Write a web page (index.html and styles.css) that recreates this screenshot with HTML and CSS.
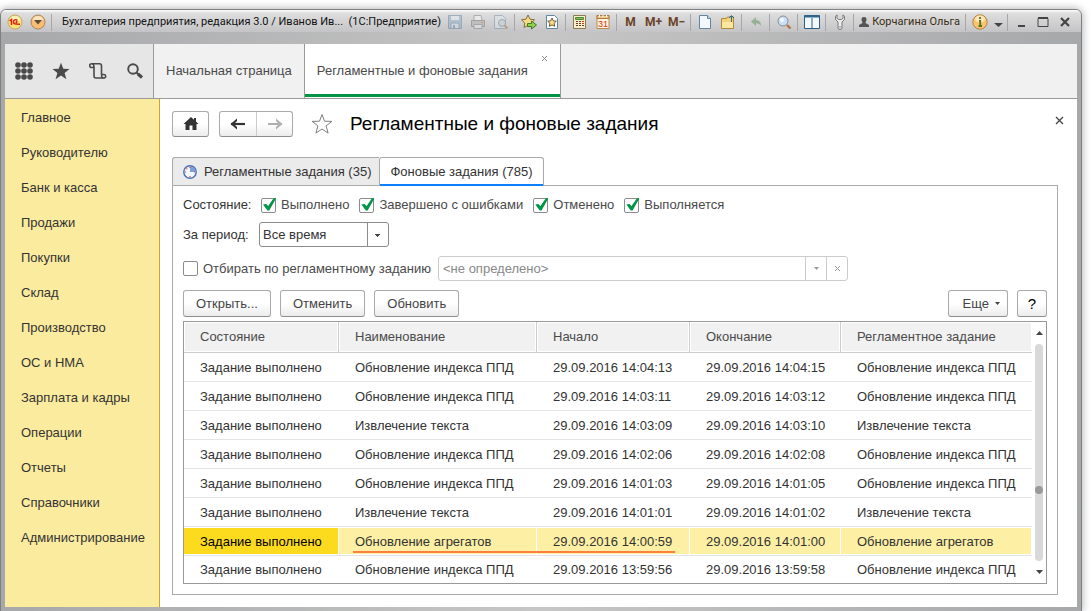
FILE: index.html
```html
<!DOCTYPE html>
<html lang="ru">
<head>
    <meta charset="UTF-8">
    <meta name="viewport" content="width=device-width, initial-scale=1.0">
    <title>Регламентные и фоновые задания</title>
    <link rel="stylesheet" href="styles.css">
</head>
<body>
    <div class="window">
        <header class="titlebar">
            <button class="tb-btn" aria-label="1С">
                <svg width="16" height="16" viewBox="0 0 16 16"><circle cx="8" cy="8" r="7" fill="#fbe27a" stroke="#c9a45c"/><ellipse cx="8" cy="5" rx="5" ry="3" fill="#fff3b8"/><path d="M2.500 7L4.500 5.500V11M10.500 6.300C8.500 5 6.500 6 6.500 8C6.500 10 8 10.300 13 10.300M10.500 8C9 7.500 8.500 8.700 10 8.700" fill="none" stroke="#d8200c" stroke-width="1.500"/></svg>
            </button>
            <button class="tb-btn" aria-label="Главное меню">
                <svg width="16" height="16" viewBox="0 0 16 16"><circle cx="8" cy="8" r="7" fill="#f8bf72" stroke="#a8855c"/><ellipse cx="8" cy="5" rx="5" ry="3" fill="#fde3bb"/><path d="M4 6h8l-4 4.500z" fill="#5f4a38"/></svg>
            </button>
            <span class="sep"></span>
            <span class="caption">Бухгалтерия предприятия, редакция 3.0 / Иванов Ив...&nbsp; (1С:Предприятие)</span>
            <div class="tb-tools">
                <button class="tb-btn faded" aria-label="Сохранить" disabled>
                    <svg width="16" height="16" viewBox="0 0 16 16"><path d="M1.500 1.500h13v13h-13z" fill="#87a9c2" stroke="#55799a"/><path d="M4 2h8v4H4z" fill="#e9f2f8"/><path d="M4 9h8v5.500H4z" fill="#d5e2eb" stroke="#55799a"/><path d="M6 11h2v3H6z" fill="#55799a"/></svg>
                </button>
                <button class="tb-btn faded" aria-label="Печать" disabled>
                    <svg width="16" height="16" viewBox="0 0 16 16"><path d="M4 1.500h7l1 5H4z" fill="#fff" stroke="#777"/><path d="M1.500 6.500h13v6h-13z" fill="#aaa" stroke="#666"/><path d="M4 10.500h8v4H4z" fill="#e4eef4" stroke="#777"/><path d="M11 8.500h2" stroke="#c60"/></svg>
                </button>
                <button class="tb-btn faded" aria-label="Предварительный просмотр" disabled>
                    <svg width="16" height="16" viewBox="0 0 16 16"><path d="M1.500 1.500h8l3 3v10h-11z" fill="#dfeaf2" stroke="#6d8ba2"/><circle cx="9" cy="9" r="3.500" fill="#bcd4e4" stroke="#777"/><path d="M11.500 11.500l3 3" stroke="#a86c3c" stroke-width="2"/></svg>
                </button>
                <span class="sep"></span>
                <button class="tb-btn" aria-label="Добавить в избранное">
                    <svg width="16" height="16" viewBox="0 0 16 16"><path d="M7 1l2 4.200 4.500.6-3.300 3.200.8 4.500-4-2.200-4 2.200.8-4.500L.5 5.800 5 5.200z" fill="#f8dc83" stroke="#8b6b3a"/><path d="M6.500 9.500h4v-2.500l5 4-5 4v-2.500h-4z" fill="#8fd04e" stroke="#3f7c22"/></svg>
                </button>
                <button class="tb-btn" aria-label="Избранное">
                    <svg width="16" height="16" viewBox="0 0 16 16"><path d="M2.500 1.500h8l3 3v10h-11z" fill="#fff" stroke="#5f86a3"/><path d="M8 4l1.300 2.800 3 .4-2.200 2.100.6 3L8 10.900l-2.700 1.400.6-3-2.200-2.100 3-.4z" fill="#f8dc83" stroke="#6e5a3a"/></svg>
                </button>
                <span class="sep"></span>
                <button class="tb-btn" aria-label="Калькулятор">
                    <svg width="16" height="16" viewBox="0 0 16 16"><path d="M1.500 1.500h12v13h-12z" fill="#f8edcb" stroke="#8d7952"/><path d="M3.500 3.500h8v2h-8z" fill="#7fbf52" stroke="#4f8d31"/><path d="M4 7.500h8M4 9.500h8M4 11.500h8" stroke="#6b3f24" stroke-dasharray="2 1"/><path d="M10 7.500h2M10 9.500h2" stroke="#d43a1c"/></svg>
                </button>
                <button class="tb-btn" aria-label="Календарь">
                    <svg width="16" height="16" viewBox="0 0 16 16"><path d="M2 1.500h12v13H2z" fill="#fff3dc" stroke="#b98a4e"/><path d="M2 1.500h12v3H2z" fill="#f0c68a" stroke="#a97a42"/><path d="M4.500 1v2M8 1v2M11.500 1v2" stroke="#fff"/><text class="day" x="3" y="13">31</text></svg>
                </button>
                <span class="sep"></span>
                <button class="tb-btn mem">M</button>
                <button class="tb-btn mem">M+</button>
                <button class="tb-btn mem">M−</button>
                <span class="sep"></span>
                <button class="tb-btn" aria-label="Новый документ">
                    <svg width="16" height="16" viewBox="0 0 16 16"><path d="M2.500 1.500h8l3 3v10h-11z" fill="#f3f8fc" stroke="#5f86a3"/><path d="M10.500 1.500v3h3" fill="#cfe0ec" stroke="#5f86a3"/></svg>
                </button>
                <button class="tb-btn" aria-label="Открыть файл">
                    <svg width="16" height="16" viewBox="0 0 16 16"><path d="M1.500 4.500h5l1-1.500h6v11.500h-12z" fill="#f3d27a" stroke="#b0893c"/><path d="M2 8h11v6H2z" fill="#fbe79f"/><path d="M11.500 8V2M9 4l2.500-2.500L14 4" fill="none" stroke="#2f6c93"/></svg>
                </button>
                <span class="sep"></span>
                <button class="tb-btn faded" aria-label="Назад" disabled>
                    <svg width="16" height="16" viewBox="0 0 16 16"><path d="M3 7.500L8 3v3c3 0 5 2 5 6-1-2-3-2.500-5-2.500V12z" fill="#4f8a4a"/></svg>
                </button>
                <span class="sep"></span>
                <button class="tb-btn" aria-label="Найти">
                    <svg width="16" height="16" viewBox="0 0 16 16"><circle cx="7" cy="7" r="5" fill="#c9e0f7" stroke="#8c8c8c"/><circle cx="6" cy="6" r="2" fill="#f2f8fe"/><path d="M11 11l3.500 3.500" stroke="#b27346" stroke-width="2.400"/></svg>
                </button>
                <span class="sep"></span>
                <button class="tb-btn" aria-label="Панели">
                    <svg width="16" height="16" viewBox="0 0 16 16"><path d="M.5 1.500h15v13H.5z" fill="#f2f8fc" stroke="#2d5f86"/><path d="M.5 1.500h15v2H.5z" fill="#2f668f"/><path d="M8 4v10.500" stroke="#2d5f86"/></svg>
                </button>
                <span class="sep"></span>
                <button class="tb-btn" aria-label="Настройки">
                    <svg width="16" height="16" viewBox="0 0 16 16"><path d="M5 .8L3.500 2.500v3L6 8v5.500q0 2 2 2t2-2V8l2.500-2.500v-3L11 .8v3.500L9.500 5.500h-3L5 4.300z" fill="#ececec" stroke="#777"/><circle cx="8" cy="13" r=".8" fill="#777"/></svg>
                </button>
                <span class="sep"></span>
                <button class="tb-user">
                    <svg width="10" height="12" viewBox="0 0 10 12"><path d="M5 1c2 0 2.500 1.200 2.500 2.500S6.500 6 6.500 7L10 9v2H0V9l3.500-2c0-1-1-2.200-1-3.500S3 1 5 1z" fill="#555"/></svg>
                    Корчагина Ольга
                </button>
                <span class="sep"></span>
                <button class="tb-btn" aria-label="Справка">
                    <svg width="16" height="16" viewBox="0 0 16 16"><circle cx="8" cy="8" r="7.200" fill="#f9c56c" stroke="#b08346"/><ellipse cx="8" cy="5" rx="5" ry="3.500" fill="#fde6bb"/><path d="M8 3v2M7 7h1.200v5M6.500 12h3.500" fill="none" stroke="#567420" stroke-width="1.800"/></svg>
                </button>
                <button class="tb-drop" aria-label="Ещё">
                    <svg width="9" height="12" viewBox="0 0 9 12"><path d="M0 7h9l-4.500 4z" fill="#444"/></svg>
                </button>
                <span class="sep"></span>
                <button class="tb-win" aria-label="Свернуть"><svg width="12" height="12" viewBox="0 0 12 12"><path d="M3 10h7" stroke="#444" stroke-width="2"/></svg></button>
                <button class="tb-win" aria-label="Развернуть"><svg width="12" height="12" viewBox="0 0 12 12"><path d="M1 2.500h10v8H1z" fill="none" stroke="#444"/><path d="M1 2h10" stroke="#444" stroke-width="2"/></svg></button>
                <button class="tb-win" aria-label="Закрыть"><svg width="12" height="12" viewBox="0 0 12 12"><path d="M2 2l8 8M10 2l-8 8" stroke="#444" stroke-width="2.200"/></svg></button>
            </div>
        </header>

        <div class="client">
            <nav class="topbar">
                <div class="quick">
                    <button aria-label="Все функции">
                        <svg width="18" height="18" viewBox="0 0 18 18" fill="#4a4a4a"><circle cx="3" cy="3" r="2.800"/><circle cx="9" cy="3" r="2.800"/><circle cx="15" cy="3" r="2.800"/><circle cx="3" cy="9" r="2.800"/><circle cx="9" cy="9" r="2.800"/><circle cx="15" cy="9" r="2.800"/><circle cx="3" cy="15" r="2.800"/><circle cx="9" cy="15" r="2.800"/><circle cx="15" cy="15" r="2.800"/></svg>
                    </button>
                    <button aria-label="Избранное">
                        <svg width="18" height="18" viewBox="0 0 18 18"><path d="M9 .8l2.300 5.900 6.200.3-4.900 3.900 1.800 6.300L9 13.600l-5.400 3.600 1.800-6.300L.5 7l6.200-.3z" fill="#4a4a4a"/></svg>
                    </button>
                    <button aria-label="История">
                        <svg width="18" height="18" viewBox="0 0 18 18" fill="none" stroke="#4a4a4a" stroke-width="1.600"><path d="M5 5.500H3A1.900 1.900 0 1 1 3 1.800H10.500Q12.500 1.800 12.500 4V12.500M5 5V14Q5 16 7 16H14.500"/><path d="M3 1.800Q5 1.800 5 5.500M12.500 12.500H14.500A1.800 1.800 0 1 1 14.500 16Q12.500 16 12.500 12.500"/></svg>
                    </button>
                    <button aria-label="Поиск">
                        <svg width="18" height="18" viewBox="0 0 18 18" fill="none" stroke="#4a4a4a"><circle cx="7" cy="7" r="4.800" stroke-width="1.900"/><path d="M10.500 10.500l2 2" stroke-width="2"/><path d="M12 12l4 3.500" stroke-width="3.200"/></svg>
                    </button>
                </div>
                <a class="page-tab" href="#">Начальная страница</a>
                <div class="page-tab page-tab-active">
                    <a href="#">Регламентные и фоновые задания</a>
                    <button class="tab-close" aria-label="Закрыть вкладку"><svg width="7" height="7" viewBox="0 0 7 7"><path d="M1 1l5 5M6 1L1 6" stroke="#888"/></svg></button>
                </div>
            </nav>

            <div class="workspace">
                <aside class="sidebar">
                    <a href="#">Главное</a>
                    <a href="#">Руководителю</a>
                    <a href="#">Банк и касса</a>
                    <a href="#">Продажи</a>
                    <a href="#">Покупки</a>
                    <a href="#">Склад</a>
                    <a href="#">Производство</a>
                    <a href="#">ОС и НМА</a>
                    <a href="#">Зарплата и кадры</a>
                    <a href="#">Операции</a>
                    <a href="#">Отчеты</a>
                    <a href="#">Справочники</a>
                    <a href="#">Администрирование</a>
                </aside>

                <main class="form">
                    <div class="form-head">
                        <button class="btn home" aria-label="Домой">
                            <svg width="16" height="14" viewBox="0 0 16 14"><path d="M8 0l3 2.700V1h2v3.500L15.500 7H13.500V13H9.500V8.500H6.500V13H2.500V7H.5z" fill="#333"/></svg>
                        </button>
                        <div class="history">
                            <button aria-label="Назад"><svg width="16" height="12" viewBox="0 0 16 12"><path d="M1 6h14" stroke="#333" stroke-width="2.200"/><path d="M7 .5v2.500L4 6l3 3v2.500L.5 6z" fill="#333"/></svg></button>
                            <button aria-label="Вперед"><svg width="16" height="12" viewBox="0 0 16 12"><path d="M1 6h14" stroke="#b0b0b0" stroke-width="2"/><path d="M9 .5v2.500L12 6l-3 3v2.500L15.500 6z" fill="#b0b0b0"/></svg></button>
                        </div>
                        <button class="fav" aria-label="В избранное">
                            <svg width="22" height="22" viewBox="0 0 22 22"><path d="M11 1.500l2.500 6.700 7.400.2-5.800 4.500 2 7.200L11 16l-6.100 4.100 2-7.200L1.100 8.400l7.400-.2z" fill="#fff" stroke="#808080"/></svg>
                        </button>
                        <h1>Регламентные и фоновые задания</h1>
                        <button class="form-close" aria-label="Закрыть"><svg width="9" height="9" viewBox="0 0 9 9"><path d="M1 1l7 7M8 1L1 8" stroke="#444" stroke-width="1.300"/></svg></button>
                    </div>

                    <div class="tabs">
                        <button class="tab">
                            <svg width="14" height="14" viewBox="0 0 14 14"><circle cx="7" cy="7" r="6.200" fill="#f1f5fc" stroke="#4a6fae" stroke-width="1.400"/><path d="M7 7V1.500A5.500 5.500 0 0 1 12.500 7z" fill="#7d9fd6"/><path d="M2 7h1M11 7h1M7 11v1M7 2v1M3.500 3.500l.7.7" stroke="#d8432a" stroke-width="1.200"/></svg>
                            Регламентные задания (35)
                        </button>
                        <button class="tab tab-active">Фоновые задания (785)</button>
                    </div>

                    <section class="panel">
                        <div class="row states">
                            <span class="label">Состояние:</span>
                            <label class="check"><input type="checkbox" checked>Выполнено</label>
                            <label class="check"><input type="checkbox" checked>Завершено с ошибками</label>
                            <label class="check"><input type="checkbox" checked>Отменено</label>
                            <label class="check"><input type="checkbox" checked>Выполняется</label>
                        </div>
                        <div class="row period">
                            <label class="label" for="period">За период:</label>
                            <select id="period"><option>Все время</option></select>
                        </div>
                        <div class="row filter">
                            <label class="check"><input type="checkbox">Отбирать по регламентному заданию</label>
                            <div class="combo">
                                <input type="text" value="&lt;не определено&gt;" aria-label="Регламентное задание" disabled>
                                <button aria-label="Выбрать" disabled><svg width="7" height="4" viewBox="0 0 7 4"><path d="M1 0h5L3.500 3z" fill="#999"/></svg></button>
                                <button aria-label="Очистить" disabled><svg width="7" height="7" viewBox="0 0 7 7"><path d="M1 1l5 5M6 1L1 6" stroke="#999"/></svg></button>
                            </div>
                        </div>
                        <div class="row commands">
                            <button class="btn">Открыть...</button>
                            <button class="btn">Отменить</button>
                            <button class="btn">Обновить</button>
                            <button class="btn more">Еще <svg width="5" height="3" viewBox="0 0 5 3"><path d="M0 0h5L2.500 3z" fill="#444"/></svg></button>
                            <button class="btn help">?</button>
                        </div>

                        <div class="grid">
                            <table>
                                <colgroup>
                                    <col class="col-state">
                                    <col class="col-name">
                                    <col class="col-start">
                                    <col class="col-end">
                                    <col>
                                </colgroup>
                                <thead>
                                    <tr><th>Состояние</th><th>Наименование</th><th>Начало</th><th>Окончание</th><th>Регламентное задание</th></tr>
                                </thead>
                                <tbody>
                                    <tr><td>Задание выполнено</td><td>Обновление индекса ППД</td><td>29.09.2016 14:04:13</td><td>29.09.2016 14:04:15</td><td>Обновление индекса ППД</td></tr>
                                    <tr><td>Задание выполнено</td><td>Обновление индекса ППД</td><td>29.09.2016 14:03:11</td><td>29.09.2016 14:03:12</td><td>Обновление индекса ППД</td></tr>
                                    <tr><td>Задание выполнено</td><td>Извлечение текста</td><td>29.09.2016 14:03:09</td><td>29.09.2016 14:03:10</td><td>Извлечение текста</td></tr>
                                    <tr><td>Задание выполнено</td><td>Обновление индекса ППД</td><td>29.09.2016 14:02:06</td><td>29.09.2016 14:02:08</td><td>Обновление индекса ППД</td></tr>
                                    <tr><td>Задание выполнено</td><td>Обновление индекса ППД</td><td>29.09.2016 14:01:03</td><td>29.09.2016 14:01:05</td><td>Обновление индекса ППД</td></tr>
                                    <tr><td>Задание выполнено</td><td>Извлечение текста</td><td>29.09.2016 14:01:01</td><td>29.09.2016 14:01:02</td><td>Извлечение текста</td></tr>
                                    <tr class="selected"><td>Задание выполнено</td><td>Обновление агрегатов<span class="underline"></span></td><td>29.09.2016 14:00:59</td><td>29.09.2016 14:01:00</td><td>Обновление агрегатов</td></tr>
                                    <tr><td>Задание выполнено</td><td>Обновление индекса ППД</td><td>29.09.2016 13:59:56</td><td>29.09.2016 13:59:58</td><td>Обновление индекса ППД</td></tr>
                                </tbody>
                            </table>
                            <div class="scrollbar">
                                <svg width="7" height="4" viewBox="0 0 7 4"><path d="M0 4h7L3.500 0z" fill="#444"/></svg>
                                <div class="track"><span class="thumb"></span></div>
                                <svg width="7" height="4" viewBox="0 0 7 4"><path d="M0 0h7L3.500 4z" fill="#444"/></svg>
                            </div>
                        </div>
                    </section>
                </main>
            </div>
        </div>
    </div>
</body>
</html>
```
FILE: styles.css
```css
* {
    box-sizing: border-box;
}

body {
    margin: 0;
    min-height: 100vh;
    padding: 9px 9px 0 0;
    display: flex;
    background: #fff;
    font-family: "Liberation Sans", Arial, sans-serif;
    font-size: 13px;
    line-height: 16px;
    color: #333;
}

button,
input,
select {
    font: inherit;
    color: inherit;
    margin: 0;
}

button {
    display: flex;
    align-items: center;
    justify-content: center;
    padding: 0;
    border: none;
    background: none;
}

a {
    color: inherit;
    text-decoration: none;
}

svg {
    display: block;
    flex: none;
}

/* window frame */

.window {
    flex: 1;
    min-width: 0;
    display: flex;
    flex-direction: column;
    padding: 0 4px 4px;
    border: 1px solid #808083;
    border-radius: 6px 6px 0 0;
    background: linear-gradient(to right, #a7a8aa, #c6c6c6 50%, #a7a8aa);
    box-shadow: 0 0 8px rgba(0, 0, 0, 0.35);
}

.titlebar {
    height: 34px;
    margin: 0 -4px;
    padding: 0 5px 10px 2px;
    display: flex;
    align-items: center;
    border-radius: 5px 5px 0 0;
    background: linear-gradient(#fff 0, #dededf 3px, #c4c4c6 22px, transparent 22px);
    font-family: Roboto, Tahoma, sans-serif;
    font-size: 11px;
    color: #111;
    white-space: nowrap;
}

.tb-btn {
    width: 23px;
    height: 20px;
    flex: none;
}

.faded {
    opacity: 0.45;
}

.sep {
    width: 1px;
    height: 17px;
    margin: 0 2px;
    flex: none;
    background: #a6a6a8;
}

.caption {
    padding-left: 8px;
    flex: 1;
    min-width: 0;
}

.tb-tools {
    display: flex;
    align-items: center;
}

.mem {
    font-size: 12px;
    font-weight: bold;
    color: #6b4226;
}

.day {
    font-family: "Liberation Sans", Arial, sans-serif;
    font-size: 9px;
    fill: #d8321a;
}

.tb-user {
    gap: 3px;
    padding: 0 3px;
    color: #3b2c12;
}

.tb-drop {
    width: 14px;
}

.tb-win {
    width: 22px;
    height: 20px;
}

.client {
    flex: 1;
    display: flex;
    flex-direction: column;
    background: #fff;
}

/* open pages */

.topbar {
    height: 55px;
    display: flex;
    background: #f1f1f1;
    border-bottom: 1px solid #9a9a9a;
    color: #4a4a4a;
}

.quick {
    width: 149px;
    display: flex;
    align-items: center;
    gap: 19px;
    padding-left: 10px;
    background: #e6e6e6;
    border-right: 1px solid #9a9a9a;
}

.page-tab {
    position: relative;
    display: flex;
    align-items: center;
    padding: 0 12px;
    border-right: 1px solid #9a9a9a;
}

.page-tab-active {
    padding-right: 32px;
    background: #fff;
    box-shadow: inset 0 -1px 0 #fff, inset 0 -4px 0 #009646;
}

.tab-close {
    position: absolute;
    top: 11px;
    right: 12px;
}

.workspace {
    flex: 1;
    display: flex;
}

.sidebar {
    width: 155px;
    flex: none;
    padding-top: 1px;
    background: #fbeb9e;
    border-right: 1px solid #c9a72c;
}

.sidebar a {
    display: block;
    padding-left: 16px;
    line-height: 35px;
}

/* form */

.form {
    flex: 1;
    min-width: 0;
    display: flex;
    flex-direction: column;
    padding: 12px 19px 12px 12px;
}

.form-head {
    display: flex;
    align-items: center;
    height: 26px;
    margin-bottom: 20px;
}

.form-head h1 {
    margin: 0 auto 0 17px;
    font-size: 19px;
    line-height: 24px;
    font-weight: normal;
    color: #000;
}

.btn {
    height: 27px;
    padding: 0 12px;
    border: 1px solid #aaa;
    border-bottom-color: #8c8c8c;
    border-radius: 3px;
    background: linear-gradient(#fff 50%, #ececec);
    color: #444;
}

.home {
    width: 37px;
    height: 26px;
    padding: 0;
}

.history {
    display: flex;
    height: 26px;
    margin: 0 18px 0 10px;
    border: 1px solid #aaa;
    border-bottom-color: #8c8c8c;
    border-radius: 3px;
    background: linear-gradient(#fff 50%, #ececec);
}

.history button {
    width: 36px;
}

.history button + button {
    border-left: 1px solid #ccc;
}

.form-close {
    align-self: flex-start;
    width: 9px;
    height: 18px;
    margin-right: -6px;
}

.tabs {
    display: flex;
    height: 29px;
    margin-bottom: -1px;
}

.tab {
    gap: 7px;
    padding: 0 8px 0 10px;
    border: 1px solid #aaa;
    border-right: none;
    border-radius: 3px 0 0 0;
    background: #ebebeb;
}

.tab-active {
    position: relative;
    padding: 0 10px;
    border-right: 1px solid #aaa;
    border-bottom: none;
    border-radius: 3px 3px 0 0;
    background: #fff;
    box-shadow: inset 0 -2px 0 #0a80fa;
}

.panel {
    flex: 1;
    display: flex;
    flex-direction: column;
    padding: 8px 10px 10px;
    border: 1px solid #aaa;
}

.row {
    display: flex;
    align-items: center;
}

.label {
    width: 76px;
}

.states {
    height: 22px;
    gap: 10px;
}

.states .label {
    width: 68px;
}

.check {
    display: flex;
    align-items: center;
    gap: 5px;
    color: #4a4a4a;
}

.check input {
    appearance: none;
    width: 15px;
    height: 15px;
    border: 1px solid #8c8c8c;
    border-radius: 2px;
    background: #fff;
    position: relative;
}

.check input:checked::after {
    content: "";
    position: absolute;
    left: 1px;
    top: -1px;
    width: 13px;
    height: 13px;
    background: #009646;
    clip-path: polygon(0 54%, 24% 50%, 40% 66%, 80% 8%, 100% 0, 100% 8%, 48% 100%, 34% 100%);
}

.period {
    margin-top: 6px;
}

#period {
    appearance: none;
    width: 130px;
    height: 25px;
    padding: 0 24px 0 3px;
    border: 1px solid #8c8c8c;
    border-radius: 3px;
    background:
        linear-gradient(#444, #444) right 8px top 11px / 5px 1px no-repeat,
        linear-gradient(#444, #444) right 9px top 12px / 3px 1px no-repeat,
        linear-gradient(#444, #444) right 10px top 13px / 1px 1px no-repeat,
        linear-gradient(#8c8c8c, #8c8c8c) right 20px top / 1px 100% no-repeat,
        #fff;
}

.filter {
    margin-top: 9px;
    gap: 7px;
}

.combo {
    display: flex;
    width: 410px;
    height: 25px;
    border: 1px solid #ccc;
    border-radius: 3px;
}

.combo input {
    flex: 1;
    min-width: 0;
    padding: 0 4px;
    border: none;
    background: none;
    color: #888;
}

.combo button {
    width: 21px;
    border-left: 1px solid #ccc;
}

.commands {
    gap: 9px;
    margin: 9px 0 4px;
}

.more {
    gap: 6px;
    padding: 0 7px 0 14px;
    margin-left: auto;
}

.help {
    width: 30px;
    padding: 0;
    font-size: 15px;
    color: #000;
}

/* job list */

.grid {
    flex: 1;
    display: flex;
    border: 1px solid #999;
}

table {
    flex: 1;
    width: 100%;
    table-layout: fixed;
    border-collapse: separate;
    border-spacing: 0;
}

.col-state {
    width: 155px;
}

.col-name {
    width: 198px;
}

.col-start {
    width: 153px;
}

.col-end {
    width: 151px;
}

th,
td {
    height: 29px;
    padding: 0 0 0 16px;
    text-align: left;
    font-weight: normal;
    white-space: nowrap;
}

th {
    height: 31px;
    background: #f1f1f1;
    border-right: 1px solid #ccc;
    border-bottom: 1px solid #ccc;
    box-shadow: inset 0 0 0 1px #fff;
    color: #4a4a4a;
}

th:last-child {
    border-right: none;
}

td {
    padding-top: 1px;
    border-bottom: 1px solid #e4e4e4;
}

tr:last-child td {
    height: 27px;
    border-bottom: none;
}

.selected td {
    position: relative;
    background: #fdf0a5;
    box-shadow: inset -1px 1px 0 #fff, inset 0 -1px 0 #fff;
}

.selected td:first-child {
    background: #fcdb1f;
    color: #000;
}

.underline {
    position: absolute;
    z-index: 1;
    left: 14px;
    bottom: 2px;
    width: 322px;
    height: 2px;
    background: #ff7f3f;
}

.scrollbar {
    width: 14px;
    display: flex;
    flex-direction: column;
    align-items: center;
    gap: 9px;
    padding: 9px 0;
}

.track {
    flex: 1;
    width: 8px;
    display: flex;
    align-items: flex-end;
    padding-bottom: 67px;
    border-radius: 4px;
    background: #d9d9d9;
}

.thumb {
    width: 8px;
    height: 8px;
    border-radius: 50%;
    background: #999;
}
```
